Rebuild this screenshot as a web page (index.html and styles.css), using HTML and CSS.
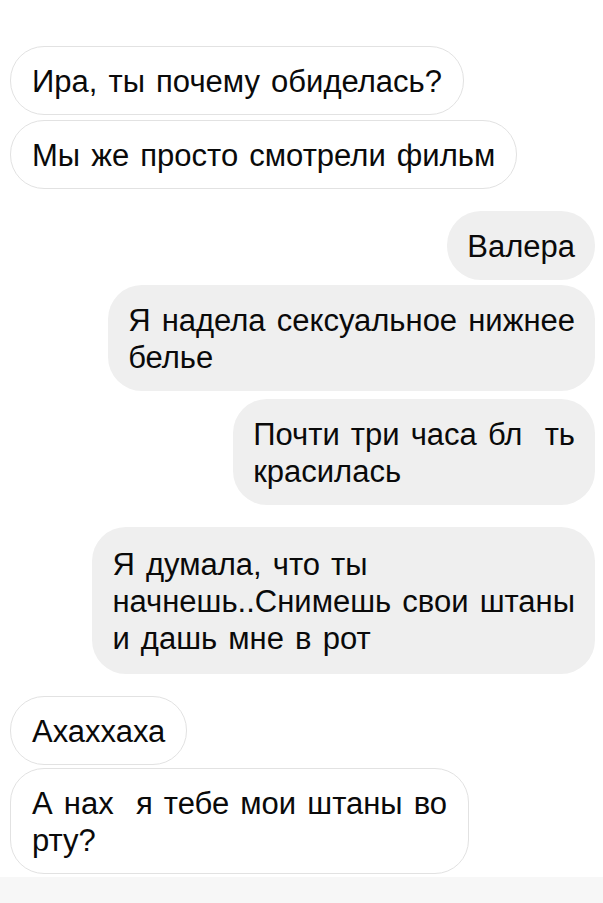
FILE: index.html
```html
<!DOCTYPE html>
<html lang="ru">
<head>
    <meta charset="UTF-8">
    <meta name="viewport" content="width=device-width, initial-scale=1.0">
    <title>Чат</title>
    <link rel="stylesheet" href="styles.css">
</head>
<body>

<main class="chat">
    <div class="msg in">Ира, ты почему обиделась?</div>
    <div class="msg in">Мы же просто смотрели фильм</div>

    <div class="msg out group">Валера</div>
    <div class="msg out">Я надела сексуальное нижнее<br>белье</div>
    <div class="msg out gap8">Почти три часа бл&nbsp; ть<br>красилась</div>
    <div class="msg out group tall">Я думала, что ты<br>начнешь..Снимешь свои штаны<br>и дашь мне в рот</div>

    <div class="msg in group">Ахаххаха</div>
    <div class="msg in gap3">А нах&nbsp; я тебе мои штаны во<br>рту?</div>
</main>

<footer class="composer"></footer>

</body>
</html>
```

FILE: styles.css
```css
html, body { margin: 0; padding: 0; }
body { font-family: "Liberation Sans", Arial, sans-serif; background: #fff; color: #0a0a0a; min-height: 100vh; display: flex; flex-direction: column; }
.chat { flex: 1; display: flex; flex-direction: column; padding: 46px 8px 0 10px; }
.msg { font-size: 31px; line-height: 37px; word-spacing: 2.5px; border-radius: 34px; padding: 17px 20px 15px 20px; margin-top: 5px; white-space: nowrap; }
.msg:first-child { margin-top: 0; }
.msg.in { align-self: flex-start; background: #fff; border: 1px solid #e2e2e2; padding: 16px 21px 14px 21px; }
.msg.out { align-self: flex-end; background: #efefef; }
.msg.group { margin-top: 22px; }
.msg.gap8 { margin-top: 8px; }
.msg.gap3 { margin-top: 3px; }
.msg.tall { padding-top: 19px; padding-bottom: 17px; }
.composer { height: 26px; background: #f7f7f7; }
```
